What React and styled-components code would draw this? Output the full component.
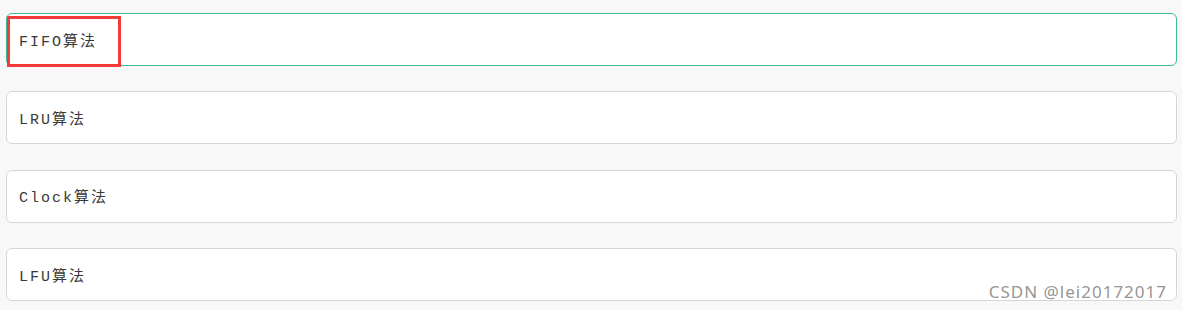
import React from "react";
import styled, { createGlobalStyle } from "styled-components";

const Global = createGlobalStyle`
  html, body { margin: 0; padding: 0; background: #f8f8f8; }
  body { width: 1182px; height: 310px; overflow: hidden; }
`;

const Page = styled.div`
  position: relative;
  width: 1182px;
  height: 310px;
  box-sizing: border-box;
  padding: 13px 5px 0 6px;
  display: flex;
  flex-direction: column;
  gap: 25.4px;
  background: #f8f8f8;
`;

const Card = styled.div`
  position: relative;
  box-sizing: border-box;
  height: 53px;
  background: #fff;
  border: 1px solid ${(p) => (p.$active ? "#3dbb98" : "#d6d6d6")};
  border-radius: 6px;
  display: flex;
  align-items: center;
  padding-left: 12px;
  font-family: "Liberation Mono", "Noto Sans CJK SC", monospace;
  font-size: 15px;
  letter-spacing: 2px;
  color: #3a3a3a;
`;

const Highlight = styled.div`
  position: absolute;
  left: 0;
  top: 2px;
  width: 114px;
  height: 51px;
  box-sizing: border-box;
  border: 3px solid #f53a3a;
`;

const Watermark = styled.div`
  position: absolute;
  right: 15px;
  bottom: 7px;
  font-family: "Noto Sans", "Open Sans", sans-serif;
  font-size: 17px;
  letter-spacing: 1px;
  color: rgba(135, 135, 135, 0.9);
`;

const items = ["FIFO算法", "LRU算法", "Clock算法", "LFU算法"];

export default function App() {
  return (
    <>
      <Global />
      <Page>
        {items.map((t, i) => (
          <Card key={t} $active={i === 0}>
            {t}
            {i === 0 && <Highlight />}
          </Card>
        ))}
        <Watermark>CSDN @lei20172017</Watermark>
      </Page>
    </>
  );
}
